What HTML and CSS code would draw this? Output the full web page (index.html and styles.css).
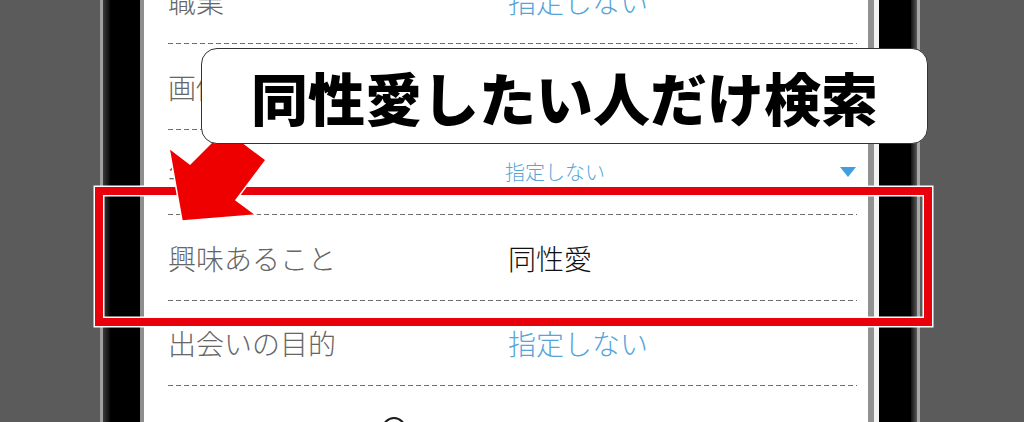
FILE: index.html
```html
<!DOCTYPE html>
<html lang="ja">
<head>
<meta charset="utf-8">
<title>同性愛したい人だけ検索</title>
<link rel="stylesheet" href="styles.css">
</head>
<body>
<div class="stage">
  <div class="device">
    <div class="bezel-left"></div>
    <div class="screen">
      <div class="list">
        <div class="row">
          <div class="label">職業</div>
          <div class="value blue">指定しない</div>
        </div>
        <div class="row">
          <div class="label">画像</div>
          <div class="value blue">指定しない</div>
        </div>
        <div class="row">
          <div class="label">年収</div>
          <div class="value select">
            <span class="small blue">指定しない</span>
            <span class="caret"></span>
          </div>
        </div>
        <div class="row">
          <div class="label">興味あること</div>
          <div class="value dark">同性愛</div>
        </div>
        <div class="row">
          <div class="label">出会いの目的</div>
          <div class="value blue">指定しない</div>
        </div>
        <div class="row last">
          <span class="circle"></span>
        </div>
      </div>
    </div>
    <div class="bezel-right"></div>
  </div>

  <div class="highlight"></div>

  <svg class="arrow" width="120" height="105" viewBox="0 0 120 105">
    <polygon points="9,23 30,39 65,4 106,35 76,75 96,90 22,96" fill="#ee0000" stroke="#ffffff" stroke-width="1.5" stroke-linejoin="miter"/>
  </svg>

  <div class="callout">同性愛したい人だけ検索</div>
</div>
</body>
</html>
```
FILE: styles.css
```css
html, body {
  margin: 0;
  padding: 0;
}
body {
  width: 1024px;
  height: 422px;
  overflow: hidden;
  background: #5b5b5b;
  font-family: "Noto Sans CJK JP", "Noto Sans", sans-serif;
}
.stage {
  position: relative;
  width: 1024px;
  height: 422px;
  overflow: hidden;
}
.device {
  display: flex;
  margin-left: 100px;
  height: 422px;
}
.bezel-left {
  width: 45px;
  flex: none;
  background: linear-gradient(to right,
    #a0a0a0 0, #a0a0a0 3px,
    #3a3a3a 3px, #0a0a0a 10px,
    #000 10px, #000 40px,
    #8e8e8e 40px, #8e8e8e 44px,
    #ffffff 44px);
}
.bezel-right {
  width: 52px;
  flex: none;
  background: linear-gradient(to right,
    #919191 0, #919191 6px,
    #f4f4f4 6px, #f4f4f4 11px,
    #000 11px, #000 43px,
    #111 43px, #5a5a5a 49px,
    #a8a8a8 49px, #a8a8a8 52px);
}
.screen {
  width: 723px;
  flex: none;
  background: #fff;
  padding: 0 11px 0 23px;
  box-sizing: border-box;
  overflow: hidden;
}
.list {
  margin-top: -41.5px;
}
.row {
  display: flex;
  align-items: center;
  height: 85.5px;
  box-sizing: border-box;
  background-image: linear-gradient(to right, #6e6e6e 0, #6e6e6e 5px, transparent 5px, transparent 8px);
  background-size: 8px 1px;
  background-repeat: repeat-x;
  background-position: left bottom;
}
.row.last {
  background: none;
}
.label {
  width: 340px;
  flex: none;
  font-size: 28px;
  font-weight: 300;
  color: #666666;
  line-height: 1;
}
.value {
  flex: 1;
  font-size: 28px;
  font-weight: 300;
  line-height: 1;
}
.blue {
  color: #55a5d9;
}
.dark {
  color: #111111;
}
.select {
  display: flex;
  align-items: center;
  justify-content: space-between;
  margin-left: -3px;
}
.small {
  font-size: 20px;
}
.caret {
  width: 0;
  height: 0;
  border-left: 8px solid transparent;
  border-right: 8px solid transparent;
  border-top: 10px solid #3f9fe0;
  margin-right: 1px;
}
.circle {
  display: block;
  width: 24px;
  height: 24px;
  border: 2px solid #1a1a1a;
  border-radius: 50%;
  margin-left: 214px;
  box-sizing: border-box;
}
.highlight {
  position: absolute;
  left: 95px;
  top: 187px;
  width: 837px;
  height: 139px;
  box-sizing: border-box;
  border: 8px solid #e8000a;
  box-shadow: 0 0 0 1.5px #ffffff, inset 0 0 0 1.5px #ffffff;
}
.arrow {
  position: absolute;
  left: 160px;
  top: 125px;
}
.callout {
  position: absolute;
  left: 201px;
  top: 48px;
  width: 727px;
  height: 96px;
  box-sizing: border-box;
  background: #fff;
  border: 1.5px solid #333;
  border-radius: 16px;
  display: flex;
  align-items: center;
  justify-content: center;
  font-size: 57px;
  font-weight: 900;
  color: #000;
  letter-spacing: 0;
  line-height: 1;
}
```
